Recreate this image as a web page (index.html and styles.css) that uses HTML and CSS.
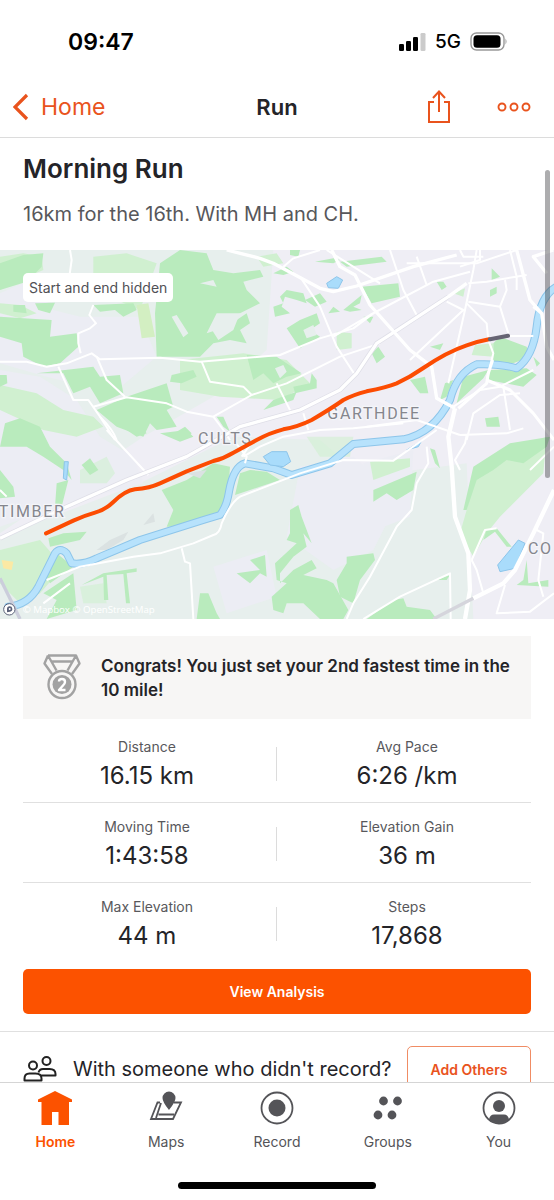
FILE: index.html
```html
<!DOCTYPE html>
<html lang="en">
<head>
<meta charset="utf-8">
<meta name="viewport" content="width=device-width, initial-scale=1">
<title>Morning Run</title>
<link rel="stylesheet" href="styles.css">
</head>
<body>
<div class="app">
  <header class="top">
    <div class="status">
      <span class="clock">09:47</span>
      <div class="status-icons">
        <svg width="27" height="18" viewBox="0 0 27 18" aria-hidden="true"><rect x="0" y="11" width="5" height="7" rx="1.3"/><rect x="7" y="8" width="5" height="10" rx="1.3"/><rect x="14" y="4" width="5" height="14" rx="1.3"/><rect x="21.500" y="0" width="5" height="18" rx="1.300" fill="#cbcbcb"/></svg>
        <span class="network">5G</span>
        <svg width="38" height="19" viewBox="0 0 38 19" aria-hidden="true"><rect x="1" y="1" width="33" height="17" rx="5.500" fill="none" stroke="#999" stroke-width="1.400"/><rect x="3.500" y="3.200" width="27" height="12.600" rx="3.500"/><path d="M35.500 6.500q2 3 0 6z" fill="#999"/></svg>
      </div>
    </div>
    <nav class="navbar">
      <a class="back" href="#"><svg width="16" height="28" viewBox="0 0 16 28" aria-hidden="true"><path d="M14 2 2 14l12 12" fill="none" stroke="currentColor" stroke-width="3.200"/></svg>Home</a>
      <span class="screen-name">Run</span>
      <div class="actions">
        <button type="button" aria-label="Share"><svg width="24" height="34" viewBox="0 0 24 34" aria-hidden="true"><path d="M7 12H2v20h20V12h-5M12 22V2M6 8l6-6.500L18 8" fill="none" stroke="currentColor" stroke-width="2"/></svg></button>
        <button type="button" aria-label="More options"><svg width="34" height="10" viewBox="0 0 34 10" aria-hidden="true"><g fill="none" stroke="currentColor" stroke-width="1.900"><circle cx="5" cy="5" r="3.500"/><circle cx="17" cy="5" r="3.500"/><circle cx="29" cy="5" r="3.500"/></g></svg></button>
      </div>
    </nav>
  </header>

  <main class="content">
    <section class="intro">
      <h1>Morning Run</h1>
      <p>16km for the 16th. With MH and CH.</p>
    </section>

    <section class="map">
      <svg class="map-art" viewBox="0 0 1662 1107" role="img" aria-label="Route map">
        <rect width="1662" height="1107" fill="#efeef5"/>
        <!-- open land -->
        <g fill="#e7efed">
          <path d="M0 0H820L800 300 640 440 430 560 0 850z"/>
          <path d="M0 860 420 700 700 560 960 570 1090 680 1400 640 1420 1107H0z"/>
        </g>
        <g fill="#ecedf4">
          <path d="M900 650 1060 620 1200 740 1120 900 1000 960 860 860z"/>
          <path d="M640 950 800 900 830 1040 680 1090z"/>
          <path d="M0 130 90 90 160 180 240 200 420 200 470 320 340 430 140 380 0 340z"/>
          <path d="M0 360 120 380 230 450 300 560 400 620 430 700 200 760 0 830z"/>
          <path d="M1090 640 1240 600 1230 800 1100 850z"/>
        </g>
        <!-- light vegetation -->
        <g fill="#d0f0d0">
          <path d="M0 20 70 10 125 20 130 60 60 90 0 120z"/>
          <path d="M280 20 380 10 470 40 420 180 280 120z"/>
          <path d="M0 160 60 165 110 190 60 205 0 190z"/>
          <path d="M0 405 110 430 190 480 280 500 310 530 230 560 130 540 0 480z"/>
          <path d="M410 165 445 160 465 260 425 265z" fill="#d3efc2"/>
          <path d="M540 330 730 310 860 330 930 400 840 450 660 440 540 420z"/>
          <path d="M770 20 830 10 850 40 790 50zM1010 245 1055 250 1055 295 1010 300z"/>
          <path d="M1425 285 1480 280 1480 320 1415 315zM1360 130 1395 115 1390 140z"/>
          <path d="M240 660 320 620 345 670 320 700 240 700z" opacity=".6"/>
          <path d="M0 900 120 870 190 950 120 1030 60 1060 0 1000z"/>
          <path d="M1400 780 1430 660 1540 600 1640 560 1630 670 1500 800 1460 850 1420 920 1380 850z"/>
          <path d="M920 560 1060 560 1050 620 960 620z" opacity=".6"/>
          <path d="M1110 635 1230 625 1230 650 1120 690z"/>
          <path d="M240 1010 310 1000 320 1060 250 1060z" opacity=".6"/>
        </g>
        <!-- woods -->
        <g fill="#b9ebbd">
          <path d="M0 40 70 15 130 10 125 50 80 95 0 120z"/>
          <path d="M0 200 70 205 155 210 150 260 230 250 235 290 180 340 130 350 70 320 65 280 0 260z"/>
          <path d="M40 165 75 165 80 190 40 185zM105 160 165 158 150 190 115 180z"/>
          <path d="M280 165 400 160 410 180 370 200 345 180 300 185z"/>
          <path d="M480 40 540 0 620 10 640 60 700 70 780 60 790 80 730 95 740 120 780 160 720 190 650 190 620 250 680 230 740 190 750 220 720 240 740 280 690 270 640 280 600 320 470 320 465 190z"/>
          <path d="M110 370 280 350 300 380 360 375 370 430 300 460 270 410 220 430 190 370z"/>
          <path d="M290 480 380 440 500 400 520 470 500 480 530 530 470 540 450 520 430 560 350 530z"/>
          <path d="M515 375 580 360 590 380 545 400 510 395zM530 545 555 530 575 550 550 570zM0 375 20 375 22 400 0 410z"/>
          <path d="M15 520 60 505 120 530 150 590 200 640 215 690 190 660 130 620 80 590 0 590z"/>
          <path d="M245 645 270 625 295 660 270 675zM380 540 430 540 440 550 410 560zM480 550 560 540 580 560 540 575z"/>
          <path d="M0 660 40 710 45 740 0 745zM170 700 205 690 180 790 165 770zM145 865 190 850 260 845 240 870 150 890z"/>
          <path d="M820 170 850 160 840 140 860 120 910 130 920 160 890 150 855 140 845 170 870 190 825 200z"/>
          <path d="M820 70 860 50 880 65 850 75zM915 150 960 130 980 155 945 170zM860 235 900 210 950 190 960 220 930 240 960 260 900 295z"/>
          <path d="M1030 180 1085 135 1080 160 1060 170 1085 180 1050 185zM985 190 1000 170 1020 185z"/>
          <path d="M740 315 830 320 905 370 860 380 820 400 790 370 760 390zM790 480 820 450 890 425 880 450z"/>
          <path d="M880 410 930 400 935 370 950 390 950 415 885 430zM650 500 670 500 690 545 670 530z"/>
          <path d="M945 35 1000 25 1020 30 1000 40zM1020 35 1145 20 1160 35 1040 50z"/>
          <path d="M870 0 900 0 895 20 870 15zM1085 110 1195 100 1200 140 1115 160zM1090 200 1120 200 1110 220z"/>
          <path d="M1475 55 1500 80 1475 90zM1470 120 1490 110 1490 130 1470 140zM1310 95 1330 95 1340 110 1325 120z"/>
          <path d="M1115 310 1135 290 1155 320 1130 340zM1230 390 1275 380 1285 430 1260 430zM1290 290 1330 280 1320 300z"/>
          <path d="M1480 280 1500 260 1580 290 1590 320 1540 340 1480 340zM1470 360 1580 355 1610 375 1570 410 1465 390zM1370 460 1390 380 1465 360 1450 385z"/>
          <path d="M1320 450 1335 400 1360 390 1340 440zM1455 505 1495 500 1500 530 1460 530zM1600 320 1620 340 1610 350z"/>
          <path d="M485 720 560 690 640 640 690 650 680 780 540 830 500 830 520 780z"/>
          <path d="M705 735 720 670 750 660 800 665 840 690z"/>
          <path d="M870 780 895 765 905 800 935 880 910 850 920 890 880 920 840 970 840 1000 880 960 935 930 950 955 910 975 980 990 1000 1000 1045 1080 1030 1107 960 1107 910 1060 860 1060 850 1090 820 1080 815 1040 860 1000 830 990 825 940 890 880 860 870 870 850z"/>
          <path d="M1010 990 1040 940 1040 920 1120 910 1125 930 1080 990 1060 1060 1020 1040zM750 930 795 915 800 980 780 970 750 1000 710 970 780 960z"/>
          <path d="M590 1107 600 1030 625 1030 650 1090 660 1107zM1120 720 1250 665 1240 720 1190 750 1160 730 1120 755z"/>
          <path d="M1290 595 1305 600 1320 655 1305 640zM1390 780 1420 650 1530 580 1650 560 1640 590 1570 640 1520 630 1480 660 1430 690 1400 780z"/>
          <path d="M1450 870 1460 840 1490 835 1535 890 1520 890 1485 845zM1570 990 1580 930 1585 1000 1645 990 1645 1010 1550 1005z"/>
          <path d="M1100 1107 1180 1050 1210 1045 1220 1070 1290 1080 1310 1107zM1310 990 1350 975 1340 990z"/>
          <path d="M140 980 170 910 220 950 150 1000zM130 1030 220 970 230 1080 140 1107 170 1050zM245 1005 310 970 410 955 410 965 380 970 390 1060 378 1060 370 972 320 975 325 1050 312 1050 310 980z"/>
        </g>
        <g fill="#e7efed"><path d="M515 200 530 195 565 250 550 262zM630 230 720 190 700 240 655 270zM600 100 640 90 650 110zM910 240 940 225 950 255 920 265zM825 355 850 345 860 365 840 385z"/></g>
        <path d="M5 930 40 935 35 960 10 955z" fill="#fbe9a4"/>
        <g fill="#dbe2e2"><path d="M290 900 330 870 385 845 370 870 320 900zM430 825 460 790 465 815zM560 670 620 660 600 685z"/></g>
        <!-- water -->
        <path d="M25 1070Q85 1065 115 1010L165 910Q180 890 200 910L215 940Q250 945 290 925L420 870 610 810 660 795Q680 770 687 725 700 650 735 640L820 655 875 675 990 640 1060 582 1210 568Q1300 550 1350 450 1370 370 1430 343 1500 340 1550 355 1600 320 1610 230 1620 130 1680 105" fill="none" stroke="#8dc5ea" stroke-width="24" stroke-linejoin="round" stroke-linecap="round"/>
        <path d="M25 1070Q85 1065 115 1010L165 910Q180 890 200 910L215 940Q250 945 290 925L420 870 610 810 660 795Q680 770 687 725 700 650 735 640L820 655 875 675 990 640 1060 582 1210 568Q1300 550 1350 450 1370 370 1430 343 1500 340 1550 355 1600 320 1610 230 1620 130 1680 105" fill="none" stroke="#b7e2fc" stroke-width="18" stroke-linejoin="round"/>
        <g fill="#a9dcfb" stroke="#8dc5ea" stroke-width="3"><path d="M790 620 815 605 860 605 872 635 850 650 810 645zM980 100 1010 80 1028 90 1015 115 985 113zM1493 945 1555 870 1575 880 1545 955 1500 965zM193 635 205 635 200 690 190 685zM1220 600 1265 572 1255 590z"/></g>
        <!-- minor roads -->
        <g fill="none" stroke="#fff" stroke-width="6" stroke-linejoin="round">
          <path d="M210 0 215 30 208 80M280 165 268 195 288 220 270 235 235 250 235 280 242 310M175 350 220 450 265 450 300 500 345 570M290 320 320 390 375 440M280 470 380 442 500 460 560 485 640 500 670 540 690 570"/>
          <path d="M605 335 630 395 730 410 755 435 860 400 1020 320 1140 280M640 500 755 435M830 400 875 490M900 80 960 170 1010 290 1065 375M850 50 880 25 960 0M910 490 925 540"/>
          <path d="M0 335H80L140 350 200 340 275 310 300 328 480 323 600 335 840 315 960 265 1060 235 1120 190M1000 260 1110 195 1300 95 1410 65M980 0 1140 100M1170 0 1210 120 1255 205M1250 20 1280 105M1220 40 1430 40 1550 0M1380 0 1390 20 1450 20"/>
          <path d="M1430 0 1420 60 1395 180 1345 400M1405 100 1460 95 1580 75M1405 155 1500 170M1440 0 1440 30 1380 50M1530 0 1550 80 1550 120M1515 90 1520 120 1500 170 1525 250M1400 160 1460 220 1465 270M1340 155 1390 180 1230 330M1525 258 1600 258"/>
          <path d="M1465 270 1480 310 1460 390M1360 470 1440 420 1500 410 1600 360M1400 570 1420 490 1500 435 1560 430M1510 410 1530 540M1380 555 1520 550 1570 535M1100 530 1250 510 1380 555"/>
          <path d="M300 500Q340 540 350 570M320 540 445 675M210 1000 130 1060M700 570 740 620 735 640M0 720 20 740M140 990 240 950 400 920 480 910 580 880 640 855Q660 850 665 820 690 760 720 740L900 670 1030 630 1180 632 1310 540"/>
          <path d="M545 895 555 935 570 940 580 1107M1280 590 1285 640 1250 700 1235 780 1190 830 1110 980 1060 1060 1040 1107M1090 1107 1200 1040 1350 970 1352 1107M1415 930 1455 840 1490 835M1415 930 1430 960 1450 1030M1515 1005 1490 1090 1590 1085 1662 1030M1610 840 1630 850 1615 990 1630 1040M1590 660 1662 590"/>
          <path d="M730 620 780 590 850 560 960 540 1060 535 1210 520M725 620 760 570M1380 660 1365 630 1395 580 1400 555"/>
        </g>
        <!-- main roads -->
        <g fill="none" stroke="#dedee7" stroke-width="14" stroke-linejoin="round">
          <path d="M0 865 200 770 380 690 560 620 720 530 900 480 1020 420 1070 370 1130 280 1200 235 1345 140"/>
        </g>
        <g fill="none" stroke="#fff" stroke-width="10" stroke-linejoin="round">
          <path d="M0 865 200 770 380 690 560 620 720 530 900 480 1020 420 1070 370 1130 280 1200 235 1345 140 1400 100"/>
          <path d="M680 0 780 25 820 40 960 115 1000 125 1070 108 1240 50 1370 15M995 0 1020 50 1065 75 1110 165 1230 300 1295 350 1310 445 1365 475M1660 0 1600 20 1640 70M1550 0 1590 150 1625 190 1640 290 1662 330"/>
          <path d="M1365 475 1345 560 1355 650 1365 800 1405 910 1410 1020 1395 1107M1662 720 1600 850 1545 960 1510 1000 1420 1045" stroke-width="13"/>
          <path d="M1460 390 1530 420 1600 490 1662 570M1375 475 1460 400 1465 370 1478 330M1600 170 1625 190" stroke-width="9"/>
          <path d="M0 985 60 1107" stroke="#cbcddb"/>
          <path d="M1420 1045 1300 1107" stroke="#d5d5dc"/>
        </g>
        <g class="place">
          <text x="594" y="582">CULTS</text>
          <text x="982" y="506">GARTHDEE</text>
          <text x="-4" y="802">TIMBER</text>
          <text x="1584" y="913">CO</text>
        </g>
        <!-- recorded track -->
        <path d="M138 850 220 812Q250 798 285 788 315 780 340 756 375 722 405 718 450 714 480 700L560 664 640 633Q670 626 700 608L770 570Q810 548 850 538 895 530 935 510 990 478 1030 450 1060 434 1100 424 1160 412 1190 400 1230 382 1270 354 1340 306 1400 286 1435 274 1467 268" fill="none" stroke="#fc4c02" stroke-width="12" stroke-linecap="round" stroke-linejoin="round"/>
        <path d="M1470 268 1524 257" stroke="#666473" stroke-width="12" stroke-linecap="round"/>
        <circle cx="28" cy="1078" r="17" fill="#fff" stroke="#596078" stroke-width="3"/>
        <path d="M21 1087V1077a8 8 0 1 1 9 8z" fill="#596078"/><circle cx="29" cy="1077" r="3" fill="#fff"/>
        <text class="credit" x="68" y="1088">© Mapbox © OpenStreetMap</text>
      </svg>
      <span class="map-note">Start and end hidden</span>
    </section>

    <section class="details">
      <div class="award">
        <svg width="38" height="46" viewBox="0 0 38 46" fill="none" stroke="#a2a2a2" stroke-width="2.400" stroke-linejoin="round" aria-hidden="true"><path d="M5 1.500H33L36.500 9.500 29 20M5 1.500 1.500 9.500 9 20M5 1.500 13.500 16.500M33 1.500 24.500 16.500M8 7.500H30"/><circle cx="19" cy="30.500" r="13.500"/><circle cx="19" cy="30.500" r="9.500" fill="#a2a2a2" stroke="none"/><path d="M16 27.500Q16 25 19 25T22 28Q22 29.500 20 31.500L16 36H22.500" stroke="#fff"/></svg>
        <p>Congrats! You just set your 2nd fastest time in the 10 mile!</p>
      </div>
      <dl class="stats">
        <div class="stat"><dt>Distance</dt><dd>16.15 km</dd></div>
        <div class="stat"><dt>Avg Pace</dt><dd>6:26 /km</dd></div>
        <div class="stat"><dt>Moving Time</dt><dd>1:43:58</dd></div>
        <div class="stat"><dt>Elevation Gain</dt><dd>36 m</dd></div>
        <div class="stat"><dt>Max Elevation</dt><dd>44 m</dd></div>
        <div class="stat"><dt>Steps</dt><dd>17,868</dd></div>
      </dl>
      <button type="button" class="primary">View Analysis</button>
    </section>

    <section class="others">
      <svg width="34" height="26" viewBox="0 0 34 26" fill="none" stroke="#222" stroke-width="2" stroke-linejoin="round" aria-hidden="true"><circle cx="10" cy="9.500" r="4"/><circle cx="23.500" cy="5" r="4"/><path d="M1.500 24.500V22.500Q1.500 17.500 6.500 17.500H12.500Q18.500 17.500 18.500 22.500V24.500zM15.500 16.500Q16.500 13 20 13H26.500Q32.500 13 32.500 18V19.500H18"/></svg>
      <span class="question">With someone who didn't record?</span>
      <button type="button" class="outline">Add Others</button>
    </section>
  </main>

  <nav class="tabs">
    <a class="tab active" href="#"><svg width="36" height="36" viewBox="0 0 36 36" aria-hidden="true"><path d="M18 1 35 9.500V12H32V35H21.500V22H15V35H4.500V12H1V9.500z" fill="currentColor"/></svg>Home</a>
    <a class="tab" href="#"><svg width="36" height="36" viewBox="0 0 36 36" aria-hidden="true"><path d="M12 12.500H9.500L3 29H25L33 12.500H26M13 13 8 28M10.500 24.500H26" fill="none" stroke="currentColor" stroke-width="1.800"/><path d="M21 20Q14.500 12 14.500 8a6.500 6.500 0 0 1 13 0Q27.500 12 21 20z" fill="currentColor"/></svg>Maps</a>
    <a class="tab" href="#"><svg width="36" height="36" viewBox="0 0 36 36" aria-hidden="true"><circle cx="18" cy="18" r="15.500" fill="none" stroke="currentColor" stroke-width="1.800"/><circle cx="18" cy="18" r="8.500" fill="currentColor"/></svg>Record</a>
    <a class="tab" href="#"><svg width="36" height="36" viewBox="0 0 36 36" fill="currentColor" aria-hidden="true"><circle cx="13.500" cy="11" r="4.400"/><circle cx="27.500" cy="11" r="4.400"/><circle cx="8" cy="25" r="4.400"/><circle cx="22" cy="25" r="4.400"/></svg>Groups</a>
    <a class="tab" href="#"><svg width="36" height="36" viewBox="0 0 36 36" aria-hidden="true"><circle cx="18" cy="18" r="15.500" fill="none" stroke="currentColor" stroke-width="1.800"/><circle cx="18" cy="16" r="6" fill="currentColor"/><path d="M8 29.500Q9 24.500 13 24.500H23Q27 24.500 28 29.500Q18 37 8 29.500z" fill="currentColor"/></svg>You</a>
  </nav>
  <div class="home-bar"></div>
  <div class="scroll-thumb"></div>
</div>
</body>
</html>
```

FILE: styles.css
```css
* { box-sizing: border-box; }

body {
  margin: 0;
  background: #fff;
  color: #242428;
  font-family: Inter, "Liberation Sans", sans-serif;
}

h1, p, dl, dd { margin: 0; }
a { color: inherit; text-decoration: none; }
button { font: inherit; color: inherit; background: none; border: 0; padding: 0; cursor: pointer; }
svg { display: block; flex: none; }

.app {
  position: relative;
  display: flex;
  flex-direction: column;
  height: 100vh;
  overflow: hidden;
}

.top { border-bottom: 1px solid #dcdcdc; }

.status {
  display: flex;
  justify-content: space-between;
  align-items: center;
  height: 76px;
  padding: 7px 46px 0 68px;
  color: #000;
}
.clock { font-size: 23px; font-weight: 600; }
.status-icons { display: flex; align-items: center; gap: 9px; }
.network { font-size: 19px; font-weight: 500; }

.navbar {
  display: grid;
  grid-template-columns: 1fr auto 1fr;
  align-items: center;
  height: 61px;
  padding: 0 13px;
  color: #e9531d;
}
.back { display: flex; align-items: center; gap: 12px; font-size: 23px; }
.screen-name { color: #242428; font-size: 22px; font-weight: 600; }
.actions { display: flex; align-items: center; justify-content: flex-end; gap: 46px; padding-right: 10px; }

.content { flex: 1; min-height: 0; overflow: hidden; }

.intro { padding: 13px 23px 22px; }
.intro h1 { font-size: 26px; line-height: 36px; font-weight: 600; }
.intro p { margin-top: 14px; font-size: 20px; line-height: 27px; color: #57575b; }

.map { position: relative; }
.map-art { width: 100%; height: auto; }
.place {
  fill: #85868d;
  stroke: #f4f5f9;
  stroke-width: 8px;
  paint-order: stroke;
  font-family: Roboto, sans-serif;
  font-size: 48px;
  letter-spacing: 5px;
}
.credit { fill: #fff; font-family: "Open Sans", sans-serif; font-size: 29px; }
.map-note {
  position: absolute;
  top: 23px;
  left: 23px;
  padding: 5px 6px;
  border-radius: 5px;
  background: #fff;
  color: #505055;
  font-size: 14px;
  line-height: 19px;
}

.details { padding: 17px 23px; }
.award {
  display: flex;
  align-items: flex-start;
  gap: 20px;
  padding: 18px 12px 17px 20px;
  background: #f7f6f5;
}
.award p { font-size: 17px; line-height: 24px; font-weight: 600; }

.stats { display: grid; grid-template-columns: 1fr 1fr; padding: 4px 0 7px; }
.stat {
  position: relative;
  padding: 14px 0 12px 6px;
  text-align: center;
  border-bottom: 1px solid #e0e0e0;
}
.stat:nth-last-child(-n+2) { border-bottom: 0; }
.stat:nth-child(odd) { padding-left: 0; padding-right: 6px; }
.stat:nth-child(odd)::after {
  content: "";
  position: absolute;
  top: 24px;
  right: 0;
  width: 1px;
  height: 34px;
  background: #dcdcdc;
}
.stat dt { font-size: 14px; line-height: 20px; color: #58585c; }
.stat dd { margin-top: 4px; font-size: 24px; line-height: 29px; }

.primary {
  display: block;
  width: 100%;
  height: 45px;
  border-radius: 5px;
  background: #fc5200;
  color: #fff;
  font-size: 14px;
  font-weight: 600;
}

.others {
  display: flex;
  align-items: center;
  padding: 14px 23px;
  border-top: 1px solid #e0e0e0;
}
.question { margin-left: 16px; font-size: 20px; white-space: nowrap; }
.outline {
  flex: none;
  margin-left: auto;
  width: 124px;
  height: 46px;
  border: 1px solid #f08c64;
  border-radius: 5px;
  color: #e9531d;
  font-size: 14px;
  font-weight: 600;
}

.tabs {
  display: grid;
  grid-template-columns: repeat(5, 1fr);
  padding-top: 7px;
  border-top: 1px solid #d5d5d5;
  background: #fff;
}
.tab {
  display: flex;
  flex-direction: column;
  align-items: center;
  gap: 6px;
  color: #545458;
  font-size: 14px;
  line-height: 20px;
}
.active { color: #fc5200; font-weight: 600; }

.home-bar {
  width: 198px;
  height: 7px;
  margin: 30px auto 11px;
  border-radius: 4px;
  background: #000;
}

.scroll-thumb {
  position: absolute;
  top: 170px;
  right: 4px;
  width: 5px;
  height: 308px;
  border-radius: 3px;
  background: rgba(60, 60, 65, .42);
}
```
